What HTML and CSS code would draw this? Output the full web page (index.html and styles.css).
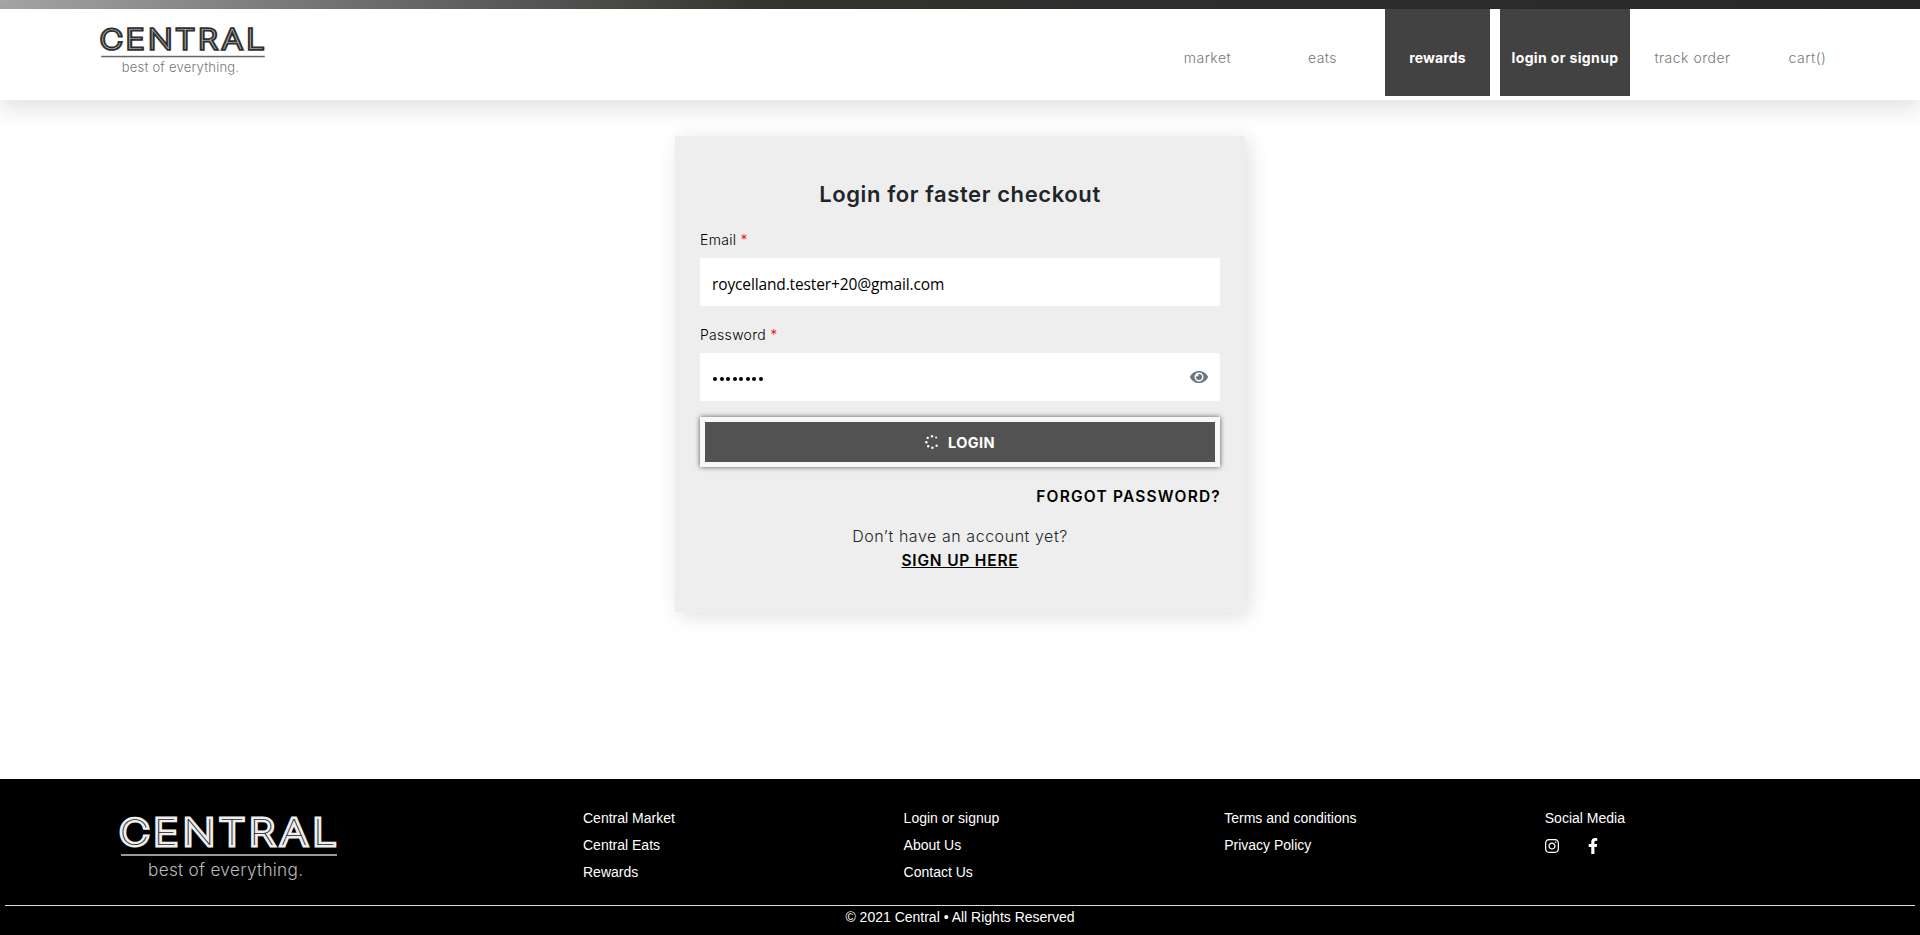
FILE: index.html
```html
<!DOCTYPE html>
<html lang="en">
<head>
<meta charset="utf-8">
<title>Central - Login</title>
<link rel="stylesheet" href="styles.css">
</head>
<body>
<svg class="defs" width="0" height="0" aria-hidden="true">
  <symbol id="logo" viewBox="0 0 218 66" overflow="visible">
    <g class="logo-letters logo-outer" transform="scale(1.18 1)"><text y="28.500" x="12.2 38.6 67 94.9 120.2 147.500 173.2">CENTRAL</text></g>
    <g class="logo-letters logo-inner" transform="scale(1.18 1)"><text y="28.500" x="12.2 38.6 67 94.9 120.2 147.500 173.2">CENTRAL</text></g>
    <rect class="logo-rule" x="1" y="38" width="216" height="2"/>
    <text class="logo-tag" x="28" y="60" textLength="155" lengthAdjust="spacing">best of everything.</text>
  </symbol>
</svg>
<div class="topbar"></div>
<header class="header">
  <a class="brand"><svg class="logo logo-dark"><use href="#logo"/></svg></a>
  <nav class="nav">
    <a class="nav-item">market</a>
    <a class="nav-item">eats</a>
    <a class="nav-item active rewards">rewards</a>
    <a class="nav-item active login">login or signup</a>
    <a class="nav-item">track order</a>
    <a class="nav-item">cart()</a>
  </nav>
</header>
<main class="main">
  <form class="card">
    <h1 class="title">Login for faster checkout</h1>
    <label class="label">Email <span class="req">*</span></label>
    <div class="field email">roycelland.tester+20@gmail.com</div>
    <label class="label second">Password <span class="req">*</span></label>
    <div class="field password">
      <span class="dots"><i></i><i></i><i></i><i></i><i></i><i></i><i></i><i></i></span>
      <svg class="eye" viewBox="0 0 576 512"><path d="M572.52 241.4C518.29 135.59 410.93 64 288 64S57.68 135.64 3.48 241.41a32.35 32.35 0 0 0 0 29.19C57.71 376.41 165.07 448 288 448s230.32-71.64 284.52-177.41a32.35 32.35 0 0 0 0-29.19zM288 400a144 144 0 1 1 144-144 143.93 143.93 0 0 1-144 144zm0-240a95.31 95.31 0 0 0-25.31 3.79 47.85 47.85 0 0 1-66.9 66.9A95.78 95.78 0 1 0 288 160z"/></svg>
    </div>
    <button class="submit" type="button">
      <svg class="spinner" viewBox="0 0 14 14"><circle cx="7" cy="1.2" r="1.2"/><circle cx="11.1" cy="2.5" r="1"/><circle cx="2.7" cy="2.9" r="1.2"/><circle cx="1.3" cy="7.2" r="1.25"/><circle cx="3.2" cy="11.3" r="1.2"/><circle cx="7.4" cy="12.8" r="1.2"/><circle cx="11.6" cy="10.8" r="1.2"/></svg>
      <span>LOGIN</span>
    </button>
    <a class="forgot">FORGOT PASSWORD?</a>
    <p class="ask">Don’t have an account yet?</p>
    <a class="signup">SIGN UP HERE</a>
  </form>
</main>
<footer class="footer">
  <div class="footer-top">
    <svg class="logo logo-light"><use href="#logo"/></svg>
    <div class="links">
      <div class="col"><a>Central Market</a><a>Central Eats</a><a>Rewards</a></div>
      <div class="col"><a>Login or signup</a><a>About Us</a><a>Contact Us</a></div>
      <div class="col"><a>Terms and conditions</a><a>Privacy Policy</a></div>
      <div class="col"><a>Social Media</a>
        <div class="social">
          <svg class="instagram" viewBox="0 0 448 512"><path d="M224.1 141c-63.6 0-114.9 51.3-114.9 114.9s51.3 114.9 114.9 114.9S339 319.5 339 255.900 287.700 141 224.100 141zm0 189.600c-41.100 0-74.700-33.500-74.700-74.700s33.500-74.700 74.700-74.700 74.700 33.500 74.700 74.700-33.600 74.700-74.700 74.700zm146.400-194.300c0 14.900-12 26.800-26.800 26.800-14.900 0-26.800-12-26.800-26.800s12-26.800 26.800-26.800 26.800 12 26.800 26.800zm76.100 27.200c-1.700-35.900-9.900-67.700-36.200-93.900-26.200-26.200-58-34.400-93.900-36.200-37-2.100-147.900-2.100-184.900 0-35.800 1.700-67.600 9.900-93.900 36.100s-34.400 58-36.200 93.900c-2.100 37-2.100 147.900 0 184.900 1.700 35.900 9.900 67.700 36.200 93.900s58 34.400 93.900 36.200c37 2.100 147.900 2.100 184.900 0 35.900-1.700 67.700-9.900 93.900-36.200 26.200-26.200 34.400-58 36.200-93.900 2.100-37 2.100-147.800 0-184.800zM398.800 388c-7.800 19.600-22.900 34.700-42.600 42.600-29.500 11.700-99.500 9-132.100 9s-102.700 2.600-132.100-9c-19.600-7.800-34.700-22.900-42.600-42.600-11.700-29.500-9-99.500-9-132.100s-2.600-102.700 9-132.100c7.800-19.600 22.900-34.700 42.600-42.600 29.500-11.700 99.500-9 132.100-9s102.700-2.600 132.100 9c19.600 7.800 34.700 22.900 42.600 42.600 11.700 29.500 9 99.500 9 132.100s2.700 102.700-9 132.100z"/></svg>
          <svg class="facebook" viewBox="0 0 320 512"><path d="M279.140 288l14.220-92.660h-88.910v-60.130c0-25.350 12.420-50.060 52.240-50.060h40.420V6.260S260.430 0 225.360 0c-73.220 0-121.080 44.380-121.080 124.720v70.620H22.890V288h81.390v224h100.170V288z"/></svg>
        </div>
      </div>
    </div>
  </div>
  <div class="copyright">© 2021 Central • All Rights Reserved</div>
</footer>
</body>
</html>
```
FILE: styles.css
```css
* { box-sizing: border-box; }
body {
  margin: 0;
  height: 935px;
  display: flex;
  flex-direction: column;
  overflow: hidden;
  background: #fff;
  font-family: Inter, "Liberation Sans", sans-serif;
  color: #212529;
}
.defs { display: block; flex: none; height: 0; }
.topbar {
  height: 9px;
  flex: none;
  background: linear-gradient(90deg, #a5a5a5 0%, #323530 40%, #282828 100%);
}
.header {
  height: 91px;
  flex: none;
  display: flex;
  justify-content: space-between;
  padding: 0 60px 4px 100px;
  background: #fff;
  box-shadow: 0 10px 20px rgba(0, 0, 0, .11);
}
.brand { padding-top: 18px; }
.logo { display: block; flex: none; overflow: visible; }
.logo-letters {
  font-family: Inter, sans-serif;
  font-size: 35px;
  font-weight: 100;
  text-anchor: middle;
}
.logo-outer { fill: var(--edge); stroke: var(--edge); stroke-width: 4.800px; stroke-miterlimit: 2; }
.logo-inner { fill: var(--core); }
.logo-rule { fill: var(--rule); }
.logo-tag { font-family: Inter, sans-serif; font-size: 17.2px; font-weight: 300; fill: var(--tag); }
.logo-dark { width: 166px; height: 50px; --edge: #303030; --core: #ccc; --rule: #666; --tag: #777; }
.logo-light { width: 218px; height: 66px; --edge: #eee; --core: #222; --rule: #999; --tag: #bbb; }
.nav { display: flex; gap: 10px; }
.nav-item {
  width: 105px;
  padding-top: 39px;
  text-align: center;
  font-size: 14px;
  line-height: 20px;
  font-weight: 300;
  letter-spacing: .5px;
  color: #777;
  white-space: nowrap;
}
.active { background: #424242; color: #fff; font-weight: 700; letter-spacing: .15px; }
.login { width: 130px; letter-spacing: .37px; }
.main { flex: 1; display: flex; justify-content: center; align-items: flex-start; padding-top: 36px; }
.card {
  width: 570px;
  height: 476px;
  padding: 45px 25px 0;
  display: flex;
  flex-direction: column;
  background: #eee;
  box-shadow: 4px 4px 20px rgba(0, 0, 0, .13);
}
.title { margin: 0; font-size: 22px; line-height: 26px; font-weight: 600; letter-spacing: .6px; text-align: center; }
.label { margin-top: 23px; height: 28px; font-size: 14px; line-height: 20px; font-weight: 300; letter-spacing: .3px; color: #000; }
.second { margin-top: 19px; }
.req { color: #f00020; }
.field { height: 48px; padding: 0 12px; display: flex; align-items: center; justify-content: space-between; background: #fff; }
.email { font-family: "Open Sans", "Noto Sans", sans-serif; font-size: 15.5px; letter-spacing: -.13px; color: #000; padding-top: 3px; }
.password { border-radius: 0 3px 3px 0; }
.dots { display: flex; gap: 2.5px; padding: 4px 0 0 1px; }
.dots i { width: 4px; height: 4px; border-radius: 50%; background: #000; }
.eye { width: 18px; height: 16px; fill: #6c757d; }
.submit {
  margin: 16px 0 0;
  height: 50px;
  padding: 0;
  display: flex;
  align-items: center;
  justify-content: center;
  gap: 9px;
  border: 5px solid #f8f8f8;
  background: #525252;
  box-shadow: 0 0 5px rgba(0, 0, 0, .65);
  font: 700 14.500px/20px Inter, sans-serif;
  letter-spacing: .4px;
  color: #fff;
}
.submit span { padding-top: 2px; }
.spinner { width: 14px; height: 14px; fill: #fff; }
.forgot { margin-top: 19px; font-size: 15.500px; line-height: 22px; font-weight: 600; letter-spacing: 1.2px; margin-right: -1px; text-align: right; color: #000; }
.ask { margin: 17px 0 0; font-size: 16px; line-height: 22px; font-weight: 300; letter-spacing: .55px; text-align: center; }
.signup { margin-top: 3px; align-self: center; font-size: 15.500px; line-height: 22px; font-weight: 600; letter-spacing: .8px; text-decoration: underline; color: #000; }
.footer {
  height: 156px;
  flex: none;
  padding: 0 5px;
  background: #000;
  color: #fff;
  font: 14px/27px "Liberation Sans", Arial, sans-serif;
}
.footer-top { height: 127px; display: flex; padding: 26px 0 0 115px; border-bottom: 1px solid #ddd; }
.logo-light { margin-top: 11px; }
.links { display: flex; margin-left: 245px; }
.col { width: 320.600px; display: flex; flex-direction: column; }
.social { display: flex; align-items: center; height: 27px; gap: 29px; }
.social svg { fill: #fff; }
.instagram { width: 14px; height: 16px; }
.facebook { width: 10px; height: 16px; }
.copyright { text-align: center; font-size: 14px; line-height: 22px; }
```
